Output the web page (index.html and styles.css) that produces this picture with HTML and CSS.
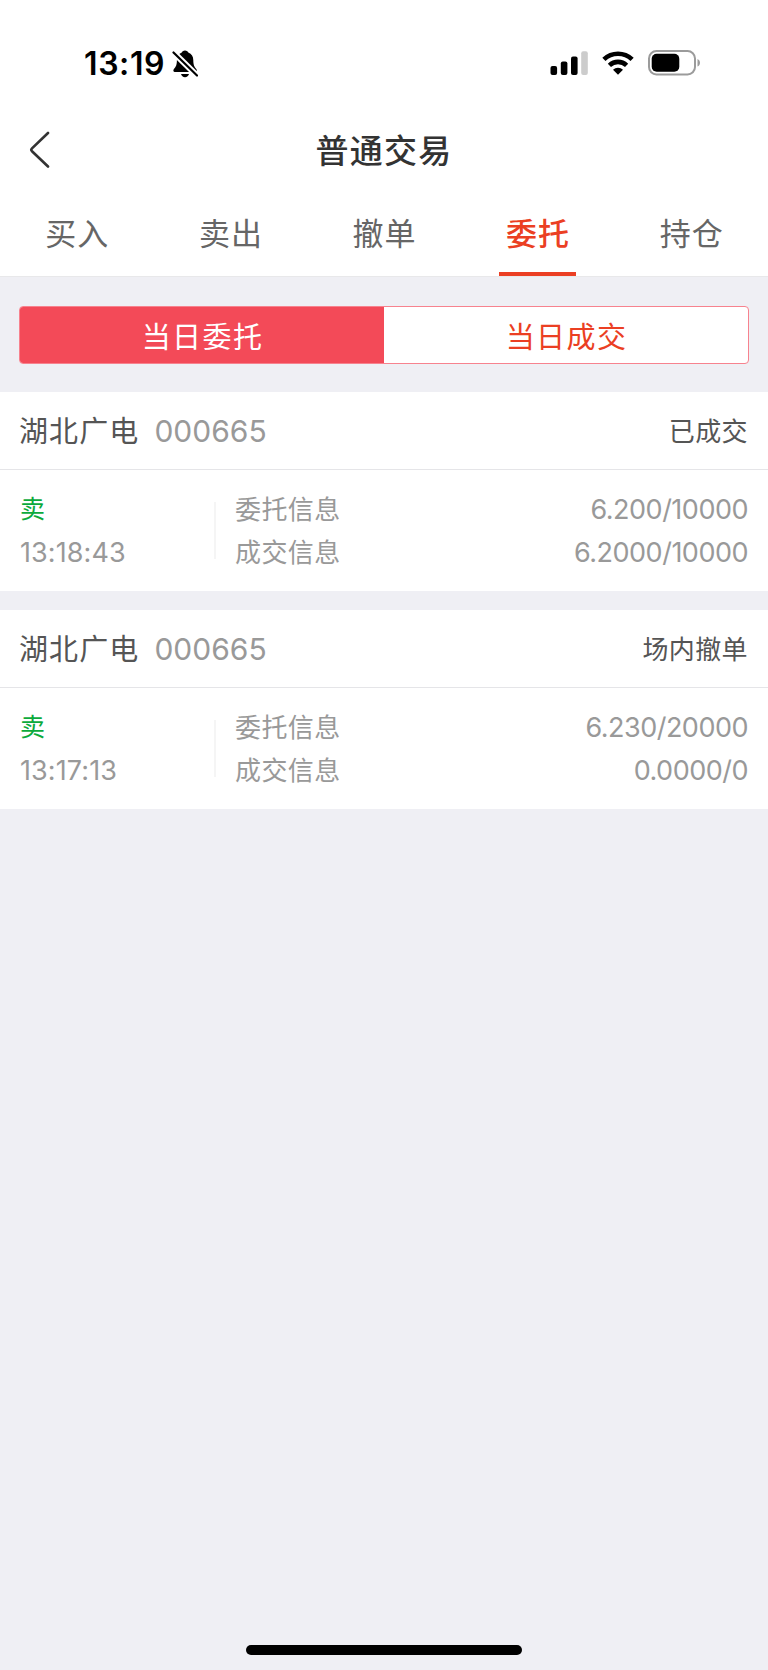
FILE: index.html
```html
<!DOCTYPE html>
<html lang="zh-CN">
<head>
  <meta charset="UTF-8">
  <title>普通交易</title>
  <link rel="stylesheet" href="styles.css">
</head>
<body>
  <div class="status-bar">
    <div class="status-left">
      <span class="clock">13:19</span>
      <svg class="icon-bell" width="26" height="28" viewBox="0 0 26 28">
        <path d="M13 0.500c1.800 0 2.900 1 3.300 2.100 3.400 1.200 5 4 5 7.700 0 4.700 1 6.700 3.100 8.900.9 1 .4 2.900-1 2.900H2.800c-1.400 0-1.900-1.900-1-2.900 2.100-2.200 3.100-4.200 3.100-8.900 0-3.700 1.600-6.500 4.900-7.700C10.100 1.500 11.200 0.500 13 0.500z"/>
        <path d="M9 24h8c-.5 2-2 3.200-4 3.200S9.500 26 9 24z"/>
        <path class="bell-gap" d="M1.500 2.500L25 25.500"/>
        <path class="bell-slash" d="M1.500 2.500L25 25.500"/>
      </svg>
    </div>
    <div class="status-right">
      <svg width="38" height="24" viewBox="0 0 38 24">
        <rect x="0.500" y="15" width="6.600" height="9" rx="2"/>
        <rect x="10.800" y="10.500" width="6.600" height="13.500" rx="2"/>
        <rect x="21" y="5.500" width="6.600" height="18.500" rx="2"/>
        <rect class="bar-off" x="31.200" y="0.300" width="6.600" height="23.700" rx="2"/>
      </svg>
      <svg width="32" height="24" viewBox="0 0 32 24">
        <path class="wifi-arc" d="M1.900 8.400A20.500 20.500 0 0 1 30.100 8.400"/>
        <path class="wifi-arc" d="M7.400 14.300A12.500 12.500 0 0 1 24.600 14.300"/>
        <path d="M16 23.800l-5-5.100a7.200 7.200 0 0 1 10 0z"/>
      </svg>
      <svg width="53" height="26" viewBox="0 0 53 26">
        <rect class="battery-case" x="1" y="1" width="46" height="23.500" rx="7.500"/>
        <rect x="3.700" y="3.800" width="27.600" height="18" rx="5"/>
        <path class="battery-cap" d="M49.500 9c3.300 1.300 3.300 6.300 0 7.600z"/>
      </svg>
    </div>
  </div>

  <div class="nav-bar">
    <a class="btn-back">
      <svg width="22" height="38" viewBox="0 0 22 38">
        <path d="M19 2L3 17.400Q1.600 18.800 3 20.200L19 35.500"/>
      </svg>
    </a>
    <h1>普通交易</h1>
  </div>

  <div class="tabs">
    <a class="tab">买入</a>
    <a class="tab">卖出</a>
    <a class="tab">撤单</a>
    <a class="tab active">委托</a>
    <a class="tab">持仓</a>
  </div>

  <div class="segment">
    <a class="segment-item selected">当日委托</a>
    <a class="segment-item">当日成交</a>
  </div>

  <div class="order-list">
    <div class="order">
      <div class="order-head">
        <span class="stock-name">湖北广电</span>
        <span class="stock-code">000665</span>
        <span class="order-status">已成交</span>
      </div>
      <div class="order-body">
        <div class="order-time">
          <p class="sell">卖</p>
          <p class="time">13:18:43</p>
        </div>
        <div class="order-info">
          <p><span>委托信息</span><span class="num">6.200/10000</span></p>
          <p><span>成交信息</span><span class="num">6.2000/10000</span></p>
        </div>
      </div>
    </div>

    <div class="order">
      <div class="order-head">
        <span class="stock-name">湖北广电</span>
        <span class="stock-code">000665</span>
        <span class="order-status">场内撤单</span>
      </div>
      <div class="order-body">
        <div class="order-time">
          <p class="sell">卖</p>
          <p class="time">13:17:13</p>
        </div>
        <div class="order-info">
          <p><span>委托信息</span><span class="num">6.230/20000</span></p>
          <p><span>成交信息</span><span class="num">0.0000/0</span></p>
        </div>
      </div>
    </div>
  </div>

  <div class="home-indicator"></div>
</body>
</html>
```
FILE: styles.css
```css
* {
  box-sizing: border-box;
}

body {
  display: flex;
  flex-direction: column;
  height: 1670px;
  margin: 0;
  font-family: Inter, "Noto Sans CJK SC", sans-serif;
  background-color: #efeff4;
}

h1,
p {
  margin: 0;
}

.status-bar {
  display: flex;
  justify-content: space-between;
  align-items: center;
  height: 112px;
  padding: 13px 67px 0 84px;
  background-color: #fff;
}

.status-left,
.status-right {
  display: flex;
  align-items: center;
}

.status-left {
  gap: 7px;
  padding-top: 2px;
}

.status-right {
  gap: 14px;
}

.clock {
  font-size: 32px;
  font-weight: 600;
  line-height: 40px;
  letter-spacing: 0.6px;
}

.bell-gap,
.bell-slash {
  fill: none;
  stroke: #fff;
  stroke-width: 6;
}

.bell-slash {
  stroke: #000;
  stroke-width: 2.2;
  stroke-linecap: round;
}

.bar-off {
  fill: #ccc;
}

.wifi-arc {
  fill: none;
  stroke: #000;
  stroke-width: 4.6;
}

.battery-case {
  fill: none;
  stroke: #9b9b9b;
  stroke-width: 2;
}

.battery-cap {
  fill: #9b9b9b;
}

.nav-bar {
  display: grid;
  grid-template-columns: 100px 1fr 100px;
  align-items: center;
  height: 76px;
  background-color: #fff;
}

.btn-back {
  display: flex;
  padding-left: 29px;
}

.btn-back path {
  fill: none;
  stroke: #333;
  stroke-width: 2.6;
  stroke-linecap: round;
}

h1 {
  padding-top: 2px;
  font-size: 33px;
  font-weight: 500;
  line-height: 48px;
  letter-spacing: 1.3px;
  text-align: center;
  color: #333;
}

.tabs {
  display: flex;
  height: 89px;
  background-color: #fff;
  border-bottom: 1px solid #e8e8ea;
}

.tab {
  display: flex;
  flex: 1;
  flex-direction: column;
  align-items: center;
  padding-top: 23px;
  font-size: 31px;
  line-height: 46px;
  letter-spacing: 1px;
  text-indent: 1px;
  color: #666;
}

.tab.active {
  font-weight: 500;
  color: #eb3f23;
}

.tab.active::after {
  content: "";
  width: 77px;
  height: 5px;
  margin-top: 15px;
  background-color: #eb3f23;
}

.segment {
  display: flex;
  height: 58px;
  margin: 29px 19px 28px;
  border: 1px solid #f7828e;
  border-radius: 4px;
  background-color: #fff;
  overflow: hidden;
}

.segment-item {
  flex: 1;
  padding-top: 2px;
  font-size: 29px;
  line-height: 58px;
  letter-spacing: 1.4px;
  text-indent: 1px;
  text-align: center;
  color: #eb3f23;
}

.segment-item.selected {
  color: #fff;
  background-color: #f34a58;
}

.order-list {
  display: flex;
  flex-direction: column;
  gap: 19px;
}

.order {
  height: 199px;
  background-color: #fff;
}

.order-head {
  display: flex;
  align-items: center;
  height: 78px;
  padding: 0 20px 0 19px;
  border-bottom: 1px solid #e5e5e8;
  color: #555;
}

.stock-name {
  padding-bottom: 3px;
  font-size: 29px;
  letter-spacing: 1.1px;
}

.stock-code {
  margin-left: 15px;
  font-size: 30px;
  color: #999;
}

.order-status {
  margin-left: auto;
  padding-bottom: 2px;
  font-size: 26px;
  letter-spacing: 0.4px;
}

.order-body {
  display: flex;
  padding: 18px 20px 0;
  font-size: 26px;
  line-height: 43px;
  color: #999;
}

.order-time {
  width: 194px;
}

.order-info {
  position: relative;
  flex: 1;
  padding-left: 21px;
  letter-spacing: 0.4px;
}

/* 分隔线 */
.order-info::before {
  content: "";
  position: absolute;
  top: 14px;
  left: 0;
  width: 2px;
  height: 57px;
  background-color: #f5f5f5;
}

.order-info p {
  display: flex;
  justify-content: space-between;
}

.order-time p,
.order-info p {
  height: 43px;
}

.num {
  font-size: 27px;
  letter-spacing: -0.5px;
}

.time {
  font-size: 27px;
  letter-spacing: 0.1px;
}

.sell {
  font-size: 25px;
  color: #0caa3c;
}

.home-indicator {
  width: 276px;
  height: 10px;
  margin: auto auto 15px;
  border-radius: 5px;
  background-color: #000;
}
```
